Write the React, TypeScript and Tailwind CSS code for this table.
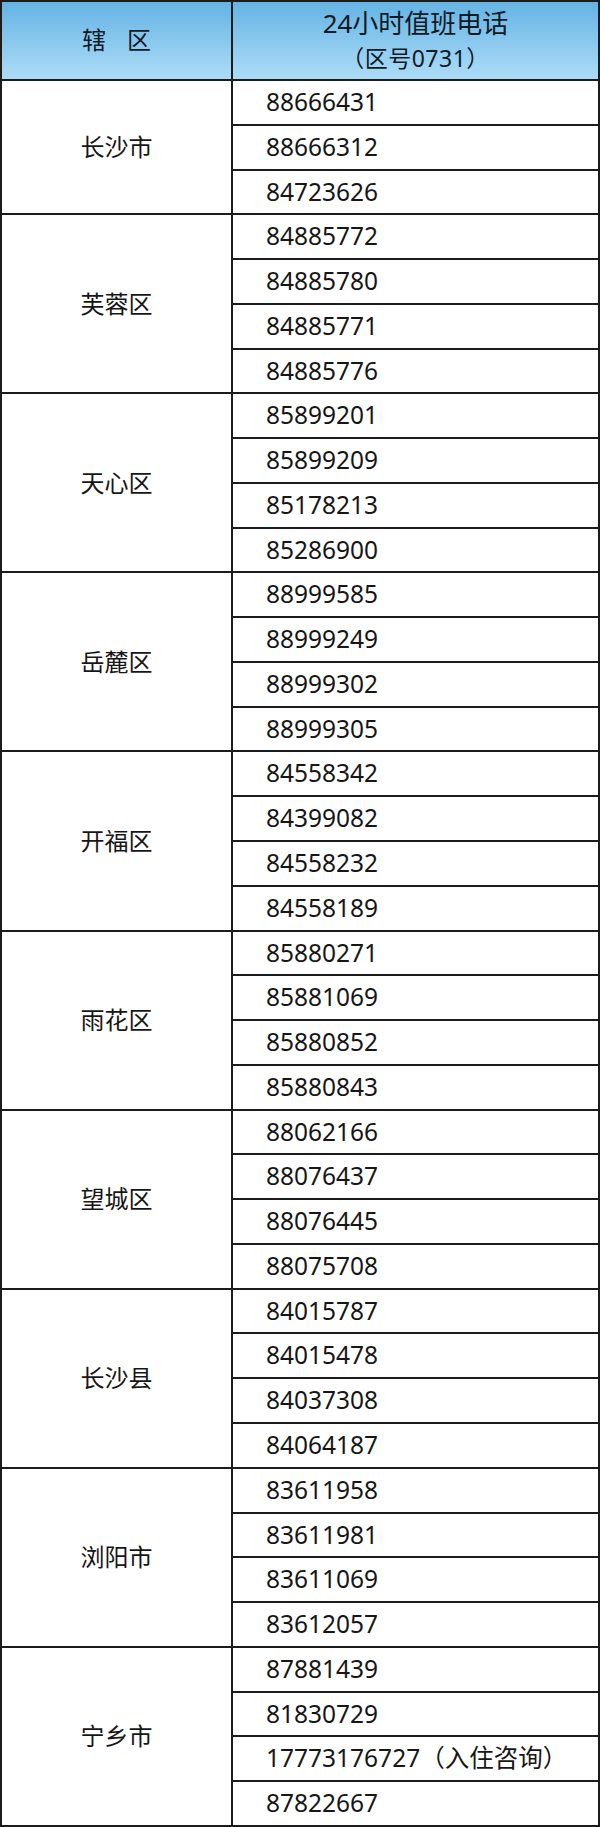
const districts: { name: string; phones: string[] }[] = [
  { name: "长沙市", phones: ["88666431", "88666312", "84723626"] },
  { name: "芙蓉区", phones: ["84885772", "84885780", "84885771", "84885776"] },
  { name: "天心区", phones: ["85899201", "85899209", "85178213", "85286900"] },
  { name: "岳麓区", phones: ["88999585", "88999249", "88999302", "88999305"] },
  { name: "开福区", phones: ["84558342", "84399082", "84558232", "84558189"] },
  { name: "雨花区", phones: ["85880271", "85881069", "85880852", "85880843"] },
  { name: "望城区", phones: ["88062166", "88076437", "88076445", "88075708"] },
  { name: "长沙县", phones: ["84015787", "84015478", "84037308", "84064187"] },
  { name: "浏阳市", phones: ["83611958", "83611981", "83611069", "83612057"] },
  { name: "宁乡市", phones: ["87881439", "81830729", "17773176727（入住咨询）", "87822667"] },
];

export default function App() {
  return (
    <div
      className="w-[600px] bg-white text-[#161616] border-x-2 border-t-2 border-[#1c1c1c]"
      style={{ fontFamily: '"Noto Sans", "Noto Sans CJK SC", sans-serif' }}
    >
      {/* Header */}
      <div className="flex h-[79px] border-b-2 border-[#1c1c1c] bg-linear-to-b from-[#64b3e4] to-[#acdcf6] text-[#0e1a26]">
        <div className="w-[231px] shrink-0 border-r-2 border-[#1c1c1c] flex items-center justify-center gap-[21px] text-[24px] pb-[2px]">
          <span>辖</span>
          <span>区</span>
        </div>
        <div className="flex-1 flex flex-col items-center justify-center pb-[1px]">
          <div className="text-[26px] leading-[35px]">24小时值班电话</div>
          <div className="text-[23px] leading-[34px] tracking-[0.5px]">（区号0731）</div>
        </div>
      </div>

      {/* Body */}
      {districts.map((d) => (
        <div key={d.name} className="flex">
          <div className="w-[231px] shrink-0 border-r-2 border-b-2 border-[#1c1c1c] flex items-center justify-center text-[24px]">
            {d.name}
          </div>
          <div className="flex-1 flex flex-col">
            {d.phones.map((p) => (
              <div
                key={p}
                className="h-[44.77px] border-b-2 border-[#1c1c1c] flex items-center pl-[33px] text-[24.5px] whitespace-nowrap"
              >
                {p}
              </div>
            ))}
          </div>
        </div>
      ))}
    </div>
  );
}
